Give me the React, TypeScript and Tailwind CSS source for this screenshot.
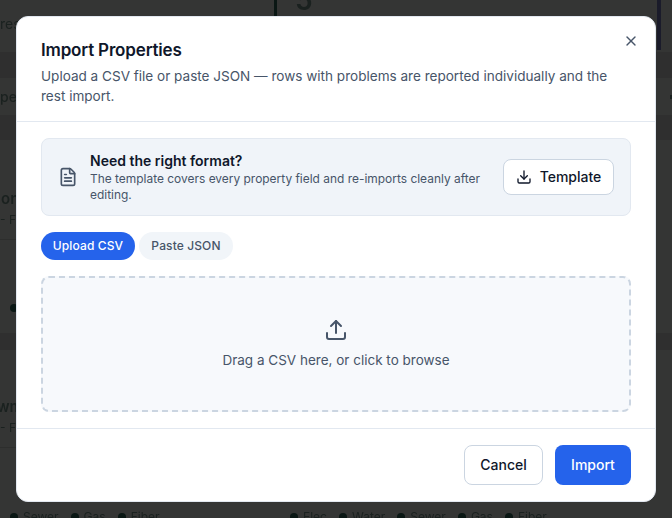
import { Download, FileText, Upload, X } from 'lucide-react';

function Utility({ label }: { label: string }) {
  return (
    <span className="flex items-center gap-[5px] text-xs leading-4 text-[#1a211f]">
      <span className="w-2 h-2 rounded-full bg-[#0a1714]" />
      {label}
    </span>
  );
}

function Band({ className }: { className: string }) {
  return <div className={`bg-[#2f2f2f] ${className}`} />;
}

function Backdrop() {
  return (
    <div className="h-[518px] overflow-hidden bg-[#343534] grid grid-cols-[256px_1fr] gap-[18px] text-[#1a211f] blur-[0.4px]">
      {/* left column */}
      <div className="flex flex-col">
        <div className="h-[52px] pt-[14px] text-sm leading-5">res</div>
        <Band className="h-[26px]" />
        <div className="h-[37px] flex items-center text-sm font-medium">pe</div>
        <Band className="h-[25px]" />
        <div className="h-[100px] flex flex-col justify-end pb-[11px] border-b border-[#2d2e2d]">
          <span className="text-[15px] leading-5 font-semibold pl-[1px]">on</span>
          <span className="text-xs leading-4 mt-[3px]">- Fa</span>
        </div>
        <div className="h-[93px] flex items-end pb-[21px]">
          <span className="w-2 h-2 rounded-full bg-[#0a1714] ml-[10px]" />
        </div>
        <Band className="h-[17px]" />
        <div className="h-[98px] flex flex-col justify-end pb-[11px] border-b border-[#2d2e2d]">
          <span className="text-[15px] leading-5 font-semibold -ml-[3px]">wm</span>
          <span className="text-xs leading-4 mt-[3px]">- Fa</span>
        </div>
        <div className="h-[70px] flex items-start pt-[61px] pl-[10px] gap-3">
          <Utility label="Sewer" />
          <Utility label="Gas" />
          <Utility label="Fiber" />
        </div>
      </div>

      {/* right column */}
      <div className="flex flex-col">
        <div className="h-[52px] flex justify-between items-start">
          <div className="h-[17px] border-l-[3px] border-[#0a1714] overflow-hidden pl-[18px]">
            <span className="block text-[28px] leading-none font-semibold -mt-[14px]">5</span>
          </div>
          <div className="w-1 h-[50px] bg-[#1a1b2a] mr-[11px]" />
        </div>
        <Band className="h-[26px]" />
        <div className="h-[37px] flex items-center justify-end">
          <span className="w-[2px] h-1 bg-[#1a211f]" />
        </div>
        <Band className="h-[25px]" />
        <div className="h-[193px]" />
        <Band className="h-[17px]" />
        <div className="h-[98px]" />
        <div className="h-[70px] flex items-start pt-[61px] pl-4 gap-3">
          <Utility label="Elec" />
          <Utility label="Water" />
          <Utility label="Sewer" />
          <Utility label="Gas" />
          <Utility label="Fiber" />
        </div>
      </div>
    </div>
  );
}

function ImportDialog() {
  return (
    <div className="w-[640px] h-[486px] bg-white rounded-xl border border-[#e2e8f0] flex flex-col relative">
      <button className="absolute top-4 right-[16px] text-[#475569]">
        <X size={16} />
      </button>

      {/* Header */}
      <div className="px-6 pt-[19px] pb-[15px] border-b border-[#e2e8f0]">
        <h2 className="text-[17px] leading-7 tracking-[-0.01em] font-semibold text-[#0f172a]">Import Properties</h2>
        <p className="text-[13.55px] leading-5 text-[#475569] mt-[2px]">
          Upload a CSV file or paste JSON — rows with problems are reported individually and the rest import.
        </p>
      </div>

      {/* Body */}
      <div className="flex-1 px-6 pt-4 pb-4 border-b border-[#e2e8f0]">
        <div className="h-[78px] flex items-center gap-3 pl-4 pr-4 bg-[#f0f4f9] border border-[#e2e8f0] rounded-lg">
          <FileText size={20} className="text-[#475569] shrink-0" />
          <div className="flex-1 min-w-0">
            <div className="text-sm leading-5 font-semibold text-[#0f172a]">Need the right format?</div>
            <div className="text-[11.95px] leading-4 text-[#475569]">
              The template covers every property field and re-imports cleanly after editing.
            </div>
          </div>
          <button className="shrink-0 w-[111px] h-9 flex items-center justify-center gap-2 bg-white border border-[#cbd5e1] rounded-lg text-sm font-medium text-[#0f172a]">
            <Download size={16} />
            Template
          </button>
        </div>

        <div className="flex gap-1 mt-4">
          <button className="w-[94px] h-7 rounded-full bg-[#2563eb] text-white text-xs font-medium tracking-[0.01em]">Upload CSV</button>
          <button className="w-[94px] h-7 rounded-full bg-[#f1f5f9] text-[#475569] text-xs font-medium tracking-[0.01em]">Paste JSON</button>
        </div>

        <div className="mt-4 h-[136px] flex flex-col items-center justify-center gap-2 bg-[#f7f9fc] border-2 border-dashed border-[#cbd5e1] rounded-lg">
          <Upload size={24} className="text-[#475569]" />
          <span className="text-[13.5px] leading-5 text-[#475569]">Drag a CSV here, or click to browse</span>
        </div>
      </div>

      {/* Footer */}
      <div className="h-[74px] shrink-0 flex items-start justify-end gap-3 px-6 pt-4">
        <button className="w-[79px] h-10 bg-white border border-[#cbd5e1] rounded-lg text-sm font-medium text-[#0f172a]">Cancel</button>
        <button className="w-[76px] h-10 bg-[#2563eb] rounded-lg text-sm font-medium text-white">Import</button>
      </div>
    </div>
  );
}

export default function App() {
  return (
    <div className="relative w-[672px] h-[518px] overflow-hidden font-['Inter',sans-serif]">
      <Backdrop />
      <div className="absolute inset-0 flex items-center justify-center">
        <ImportDialog />
      </div>
    </div>
  );
}
